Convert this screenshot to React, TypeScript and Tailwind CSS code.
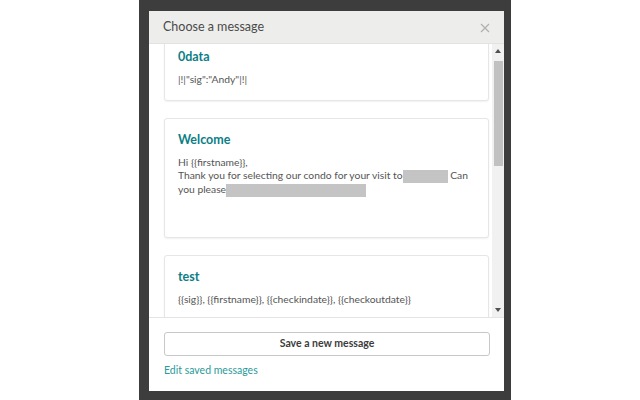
// Message picker modal

import React from 'react';

const font = { fontFamily: 'Lato, "Open Sans", "Liberation Sans", sans-serif' };

function Redact({ w }: { w: number }) {
  return <span className="inline-block h-[13px] bg-[#c4c4c4] align-middle" style={{ width: w }} />;
}

function Card({ title, children, className = '' }: { title: string; children: React.ReactNode; className?: string }) {
  return (
    <div className={`bg-white border border-[#e6e6e6] rounded-[3px] shadow-[0_1px_2px_rgba(0,0,0,0.06)] px-[13px] ${className}`}>
      <h3 className="text-[12.5px] font-bold text-[#0b7e86] leading-[16px]">{title}</h3>
      <div className="mt-[8px] text-[10.3px] leading-[13.5px] text-[#555]">{children}</div>
    </div>
  );
}

export default function App() {
  return (
    <div className="w-[640px] h-[400px] bg-white flex overflow-hidden" style={font}>
      <div className="ml-[139px] w-[372px] h-full bg-[#3d3d3d] pt-[11px] pl-[10px] relative">
        <div className="absolute left-[150px] top-[7px] text-[8px] text-[#262626] blur-[1px] whitespace-nowrap tracking-wide">
          ▬▬▬ ▬▬▬▬ ▬▬▬ ▬▬▬▬▬ ▬▬▬ ▬▬▬▬
        </div>
        <div className="relative w-[355px] h-[380px] bg-white flex flex-col">
          {/* Header */}
          <div className="h-[33px] bg-[#ededeb] border-b border-[#e2e2e0] flex items-center justify-between pl-[14px] pr-[14px] shrink-0">
            <span className="text-[12.5px] text-[#4a4a4a]">Choose a message</span>
            <svg width="10" height="10" viewBox="0 0 10 10" className="mt-[2px]">
              <path d="M1 1L9 9M9 1L1 9" stroke="#b0b0b0" strokeWidth="1.2" />
            </svg>
          </div>

          {/* Scroll area */}
          <div className="flex-1 flex overflow-hidden">
            <div className="flex-1 overflow-hidden pl-[15px] pr-[3px]">
              <div className="-mt-[8px] flex flex-col gap-[17px]">
                <Card title="0data" className="pt-[12px] pb-[13px]">
                  |!|"sig":"Andy"|!|
                </Card>
                <Card title="Welcome" className="pt-[13px] h-[120px]">
                  <div>Hi {'{{firstname}}'},</div>
                  <div>
                    Thank you for selecting our condo for your visit to<Redact w={45} /> Can
                  </div>
                  <div>
                    you please<Redact w={140} />
                  </div>
                </Card>
                <Card title="test" className="pt-[13px] h-[80px]">
                  {'{{sig}}, {{firstname}}, {{checkindate}}, {{checkoutdate}}'}
                </Card>
              </div>
            </div>
            {/* Scrollbar */}
            <div className="w-[12px] bg-[#f1f1f1] flex flex-col items-center shrink-0">
              <svg width="6" height="4" viewBox="0 0 6 4" className="mt-[5px]">
                <path d="M0 4L3 0L6 4Z" fill="#505050" />
              </svg>
              <div className="mt-[8px] w-[9px] h-[105px] bg-[#c1c1c1]" />
              <div className="flex-1" />
              <svg width="6" height="4" viewBox="0 0 6 4" className="mb-[5px]">
                <path d="M0 0L6 0L3 4Z" fill="#505050" />
              </svg>
            </div>
          </div>

          {/* Footer */}
          <div className="h-[74px] shrink-0 border-t border-[#e4e4e4] px-[15px] pt-[11px]">
            <button className="w-[326px] h-[24px] border border-[#c8c8c8] rounded-[3px] text-[10.5px] font-bold text-[#3c3c3c] bg-white">
              Save a new message
            </button>
            <div className="mt-[7px] text-[10.5px] text-[#2a9a9a]">Edit saved messages</div>
          </div>
        </div>
      </div>
    </div>
  );
}
